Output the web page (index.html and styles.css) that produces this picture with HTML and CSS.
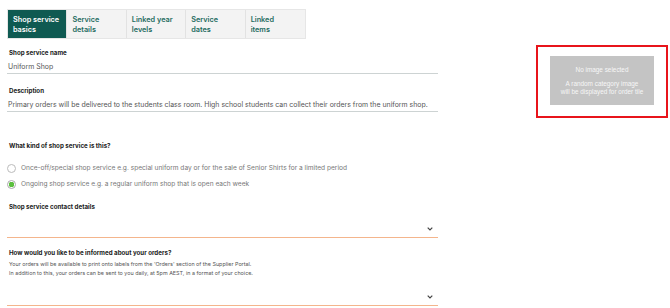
FILE: index.html
```html
<!DOCTYPE html>
<html lang="en">
<head>
  <meta charset="UTF-8">
  <meta name="viewport" content="width=device-width, initial-scale=1.0">
  <title>Shop service basics</title>
  <link rel="stylesheet" href="styles.css">
</head>
<body>

  <div class="page">
    <main class="main">
      <nav class="tabs">
        <a class="tab active">Shop service<br>basics</a>
        <a class="tab">Service<br>details</a>
        <a class="tab">Linked year<br>levels</a>
        <a class="tab">Service<br>dates</a>
        <a class="tab">Linked<br>items</a>
      </nav>

      <div class="field first">
        <label class="label">Shop service name</label>
        <div class="input">Uniform Shop</div>
      </div>

      <div class="field">
        <label class="label">Description</label>
        <div class="input">Primary orders will be delivered to the students class room. High school students can collect their orders from the uniform shop.</div>
      </div>

      <div class="group">
        <div class="label">What kind of shop service is this?</div>
        <div class="radios">
          <div class="radio"><span class="dot"></span>Once-off/special shop service e.g. special uniform day or for the sale of Senior Shirts for a limited period</div>
          <div class="radio"><span class="dot checked"></span>Ongoing shop service e.g. a regular uniform shop that is open each week</div>
        </div>
      </div>

      <div class="group tight">
        <div class="label">Shop service contact details</div>
        <div class="select">
          <svg class="chev" width="6" height="4" viewBox="0 0 6 4"><path d="M0.7 0.7 L3 3 L5.3 0.7" fill="none" stroke="#444" stroke-width="1.2"/></svg>
        </div>
      </div>

      <div class="group tight">
        <div class="label">How would you like to be informed about your orders?</div>
        <p class="help">Your orders will be available to print onto labels from the 'Orders' section of the Supplier Portal.<br>In addition to this, your orders can be sent to you daily, at 5pm AEST, in a format of your choice.</p>
        <div class="select low">
          <svg class="chev" width="6" height="4" viewBox="0 0 6 4"><path d="M0.7 0.7 L3 3 L5.3 0.7" fill="none" stroke="#444" stroke-width="1.2"/></svg>
        </div>
      </div>
    </main>

    <aside class="side">
      <div class="preview">
        <div class="placeholder">
          <span>No image selected</span>
          <span class="gap">A random category image</span>
          <span>will be displayed for order tile</span>
        </div>
      </div>
    </aside>
  </div>

</body>
</html>
```

FILE: styles.css
```css
* {
  margin: 0;
  padding: 0;
  box-sizing: border-box;
}

body {
  font-family: 'Inter', 'Noto Sans', sans-serif;
  background: #fff;
  color: #222;
}

.page {
  display: flex;
  align-items: flex-start;
  padding: 9px 2px 0 7px;
}

.main {
  width: 431px;
}

/* Tabs */
.tabs {
  display: flex;
  width: 299px;
  height: 30px;
  background: #f3f3f3;
  border: 1px solid #e6e6e6;
}

.tab {
  width: 60px;
  padding: 5px 4px 0 5px;
  font-size: 7.3px;
  line-height: 10px;
  font-weight: 600;
  color: #1e6b5f;
  border-right: 1px solid #e2e2e2;
  white-space: nowrap;
}

.tab:last-child {
  border-right: none;
}

.tab.active {
  background: #0f5a52;
  color: #fff;
}

/* Fields */
.field {
  margin-top: 12px;
}

.field.first {
  margin-top: 9px;
}

.label {
  display: block;
  font-size: 6.2px;
  line-height: 10px;
  font-weight: 700;
  color: #1a1a1a;
  padding-left: 2px;
}

.input {
  margin-top: 2px;
  height: 14px;
  padding-left: 1px;
  font-size: 6.95px;
  line-height: 13px;
  color: #555;
  border-bottom: 1px solid #cdd3d3;
  white-space: nowrap;
}

.group {
  margin-top: 29px;
}

.group.tight {
  margin-top: 10px;
}

.radios {
  margin-top: 9px;
}

.radio {
  display: flex;
  align-items: center;
  height: 16px;
  font-size: 6.6px;
  color: #777;
}

.dot {
  width: 9px;
  height: 9px;
  margin: 0 5px 0 0;
  border: 1px solid #bbb;
  border-radius: 50%;
  background: #fff;
  flex-shrink: 0;
}

.dot.checked {
  background: radial-gradient(circle, #5cbf3f 0 2.6px, #fff 3px);
  border-color: #aaa;
}

.select {
  display: flex;
  align-items: center;
  justify-content: flex-end;
  height: 17px;
  margin-top: 9px;
  padding-right: 5px;
  border-bottom: 1px solid #f4b58c;
}

.select.low {
  margin-top: 11px;
}

.help {
  margin-top: 2px;
  padding-left: 2px;
  font-size: 5.4px;
  line-height: 9px;
  color: #555;
}

/* Image preview */
.side {
  margin-left: auto;
  margin-top: 36px;
}

.preview {
  width: 132px;
  height: 73px;
  border: 2px solid #e8141b;
  padding: 9px 12px 0 12px;
}

.placeholder {
  display: flex;
  flex-direction: column;
  align-items: center;
  justify-content: center;
  height: 49px;
  background: #c4c4c4;
  font-family: 'Liberation Sans', Arial, sans-serif;
  font-size: 6.4px;
  line-height: 7.5px;
  color: #f7f7f7;
}

.placeholder .gap {
  margin-top: 7px;
}
```
